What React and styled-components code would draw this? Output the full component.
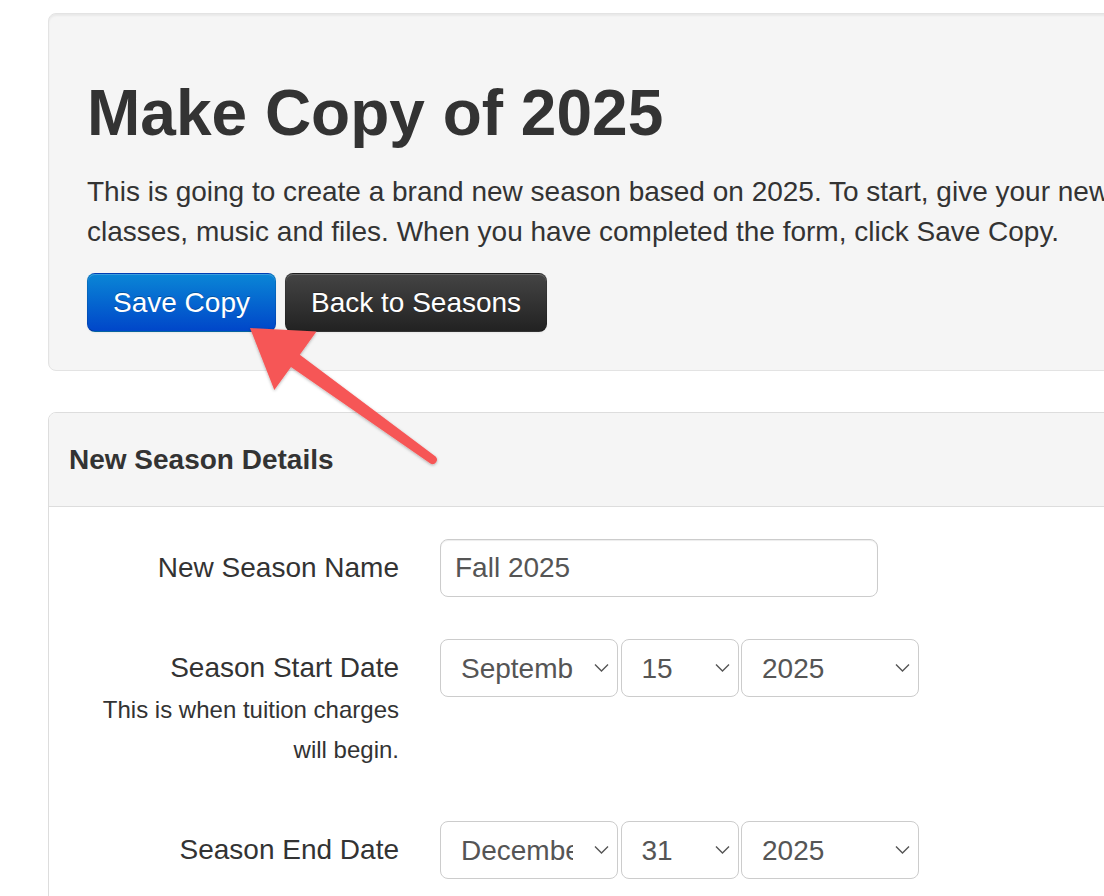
import React from "react";
import styled, { createGlobalStyle } from "styled-components";

const GlobalStyle = createGlobalStyle`
  html, body {
    margin: 0;
    padding: 0;
    overflow: hidden;
    background: #fff;
  }
  body {
    font-family: "Liberation Sans", Arial, Helvetica, sans-serif;
    color: #333;
  }
  * {
    box-sizing: border-box;
  }
`;

const Page = styled.div`
  position: relative;
  width: 1300px;
  padding: 13px 0 0 48px;
`;

const Well = styled.section`
  background: #f5f5f5;
  border: 1px solid #e3e3e3;
  border-radius: 8px;
  box-shadow: inset 0 2px 2px rgba(0, 0, 0, 0.05);
  padding: 59px 38px 38px;
`;

const Title = styled.h1`
  margin: 0;
  font-size: 64px;
  line-height: 80px;
  font-weight: 700;
  color: #333;
`;

const Intro = styled.p`
  margin: 19px 0 21px;
  font-size: 28px;
  line-height: 40px;
  white-space: nowrap;
`;

const ButtonRow = styled.div`
  display: flex;
  gap: 9px;
`;

const Button = styled.button`
  height: 59px;
  padding: 0 25px;
  font-family: inherit;
  font-size: 28px;
  line-height: 1;
  color: #fff;
  text-shadow: 0 -1px 0 rgba(0, 0, 0, 0.25);
  border: 1px solid;
  border-color: rgba(0, 0, 0, 0.1) rgba(0, 0, 0, 0.1) rgba(0, 0, 0, 0.25);
  border-radius: 8px;
  box-shadow: inset 0 1px 0 rgba(255, 255, 255, 0.2), 0 1px 2px rgba(0, 0, 0, 0.05);
  background: ${(p) =>
    p.$variant === "primary"
      ? "linear-gradient(to bottom, #0a86d6, #0046c9)"
      : "linear-gradient(to bottom, #444, #222)"};
  cursor: pointer;
`;

const Panel = styled.section`
  margin-top: 41px;
  border: 1px solid #ddd;
  border-radius: 8px;
  overflow: hidden;
`;

const PanelHeader = styled.h2`
  margin: 0;
  padding: 27px 20px 26px;
  background: #f5f5f5;
  border-bottom: 1px solid #ddd;
  font-size: 28px;
  line-height: 40px;
  font-weight: 700;
`;

const PanelBody = styled.div`
  background: #fff;
  padding: 32px 0 80px 31px;
`;

const Row = styled.div`
  display: flex;
  align-items: flex-start;
  margin-bottom: 42px;
`;

const Label = styled.label`
  flex-shrink: 0;
  width: 319px;
  padding-top: 9px;
  text-align: right;
  font-size: 28px;
  line-height: 40px;
  color: #333;
`;

const Help = styled.span`
  display: block;
  margin: 2px 0 9px;
  font-size: 24px;
  line-height: 40px;
`;

const Controls = styled.div`
  display: flex;
  gap: 2.5px;
  margin-left: 41px;
`;

const TextInput = styled.input`
  width: 438px;
  height: 58px;
  padding: 0 14px;
  font-family: inherit;
  font-size: 28px;
  color: #555;
  background: #fff;
  border: 1px solid #ccc;
  border-radius: 8px;
  box-shadow: inset 0 1px 1px rgba(0, 0, 0, 0.075);
  outline: none;
`;

const SelectWrap = styled.div`
  position: relative;
  width: ${(p) => p.$width}px;
`;

const Select = styled.select`
  appearance: none;
  -webkit-appearance: none;
  width: 100%;
  height: 58px;
  padding: 0 44px 0 20px;
  font-family: inherit;
  font-size: 28px;
  color: #555;
  background: #fff;
  border: 1px solid #ccc;
  border-radius: 8px;
  outline: none;
`;

const Chevron = styled.svg`
  position: absolute;
  right: 9px;
  top: 50%;
  transform: translateY(-50%);
  pointer-events: none;
`;

const Annotation = styled.svg`
  position: absolute;
  top: 0;
  left: 0;
  pointer-events: none;
`;

const MONTHS = [
  "January", "February", "March", "April", "May", "June",
  "July", "August", "September", "October", "November", "December",
];
const DAYS = Array.from({ length: 31 }, (_, i) => String(i + 1));
const YEARS = ["2024", "2025", "2026", "2027"];

function DropDown({ width, options, value }) {
  return (
    <SelectWrap $width={width}>
      <Select defaultValue={value}>
        {options.map((o) => (
          <option key={o} value={o}>{o}</option>
        ))}
      </Select>
      <Chevron width="15" height="9" viewBox="0 0 15 9">
        <polyline points="1,1 7.5,7.5 14,1" fill="none" stroke="#555" strokeWidth="1.4" />
      </Chevron>
    </SelectWrap>
  );
}

function DatePicker({ month, day, year }) {
  return (
    <Controls>
      <DropDown width={178} options={MONTHS} value={month} />
      <DropDown width={118} options={DAYS} value={day} />
      <DropDown width={178} options={YEARS} value={year} />
    </Controls>
  );
}

function App() {
  return (
    <Page>
      <GlobalStyle />
      <Well>
        <Title>Make Copy of 2025</Title>
        <Intro>
          This is going to create a brand new season based on 2025. To start, give your new season a name and dates. We will copy all of your
          <br />
          classes, music and files. When you have completed the form, click Save Copy.
        </Intro>
        <ButtonRow>
          <Button $variant="primary">Save Copy</Button>
          <Button $variant="inverse">Back to Seasons</Button>
        </ButtonRow>
      </Well>

      <Panel>
        <PanelHeader>New Season Details</PanelHeader>
        <PanelBody>
          <Row>
            <Label>New Season Name</Label>
            <Controls>
              <TextInput defaultValue="Fall 2025" />
            </Controls>
          </Row>
          <Row>
            <Label>
              Season Start Date
              <Help>This is when tuition charges will begin.</Help>
            </Label>
            <DatePicker month="September" day="15" year="2025" />
          </Row>
          <Row>
            <Label>Season End Date</Label>
            <DatePicker month="December" day="31" year="2025" />
          </Row>
        </PanelBody>
      </Panel>

      <Annotation width="1104" height="896" viewBox="0 0 1104 896">
        <defs>
          <filter id="arrowShadow" x="-20%" y="-20%" width="140%" height="140%">
            <feDropShadow dx="0" dy="1" stdDeviation="1.5" floodColor="#000" floodOpacity="0.3" />
          </filter>
        </defs>
        <path
          d="M250 328 L316.5 331.6 L299.8 354.7 L435.6 456.4 A4.5 4.5 0 0 1 430.4 463.6 L291 366.9 L274.3 390 Z"
          fill="#f65757"
          filter="url(#arrowShadow)"
        />
      </Annotation>
    </Page>
  );
}

export default App;
